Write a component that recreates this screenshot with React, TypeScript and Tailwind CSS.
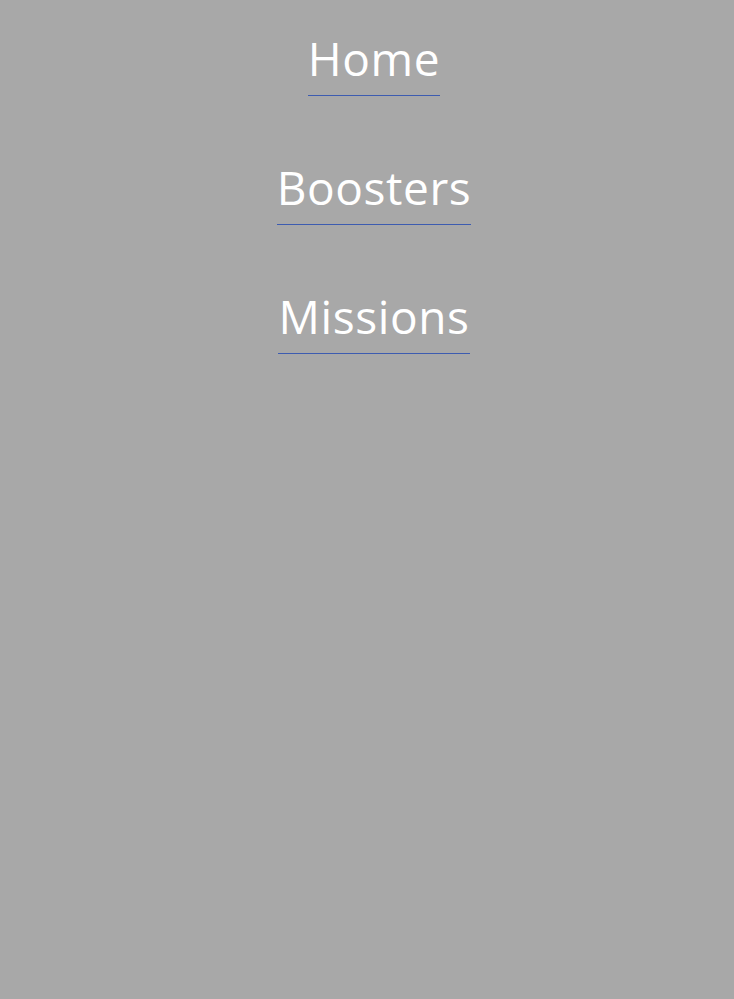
const links = ["Home", "Boosters", "Missions"];

export default function App() {
  return (
    <div className="min-h-screen w-full bg-[#a8a8a8] flex flex-col items-center pt-[28px] pl-[14px] gap-[61px]">
      {links.map((label) => (
        <a
          key={label}
          href="#"
          className="block text-white text-[46px] leading-[60px] pb-[7px] tracking-[0.6px] border-b border-[#3d5cb0] font-['Open_Sans',sans-serif]"
        >
          {label}
        </a>
      ))}
    </div>
  );
}
